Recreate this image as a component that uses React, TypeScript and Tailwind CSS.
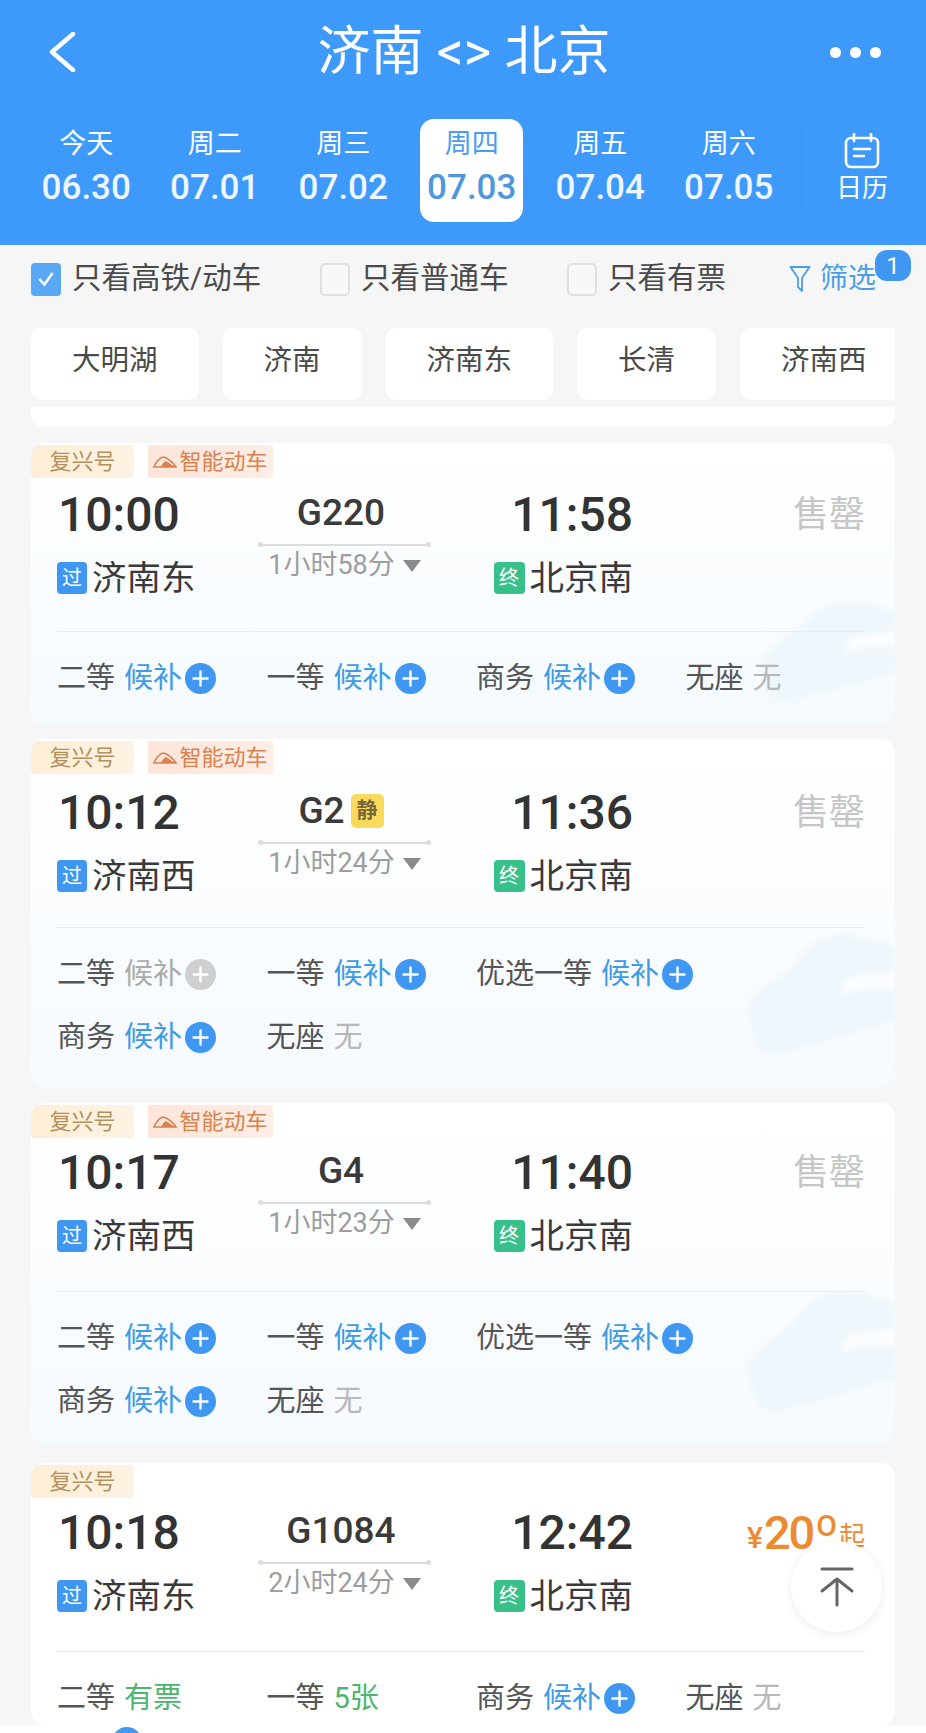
import React from "react";

type Seat = {
  name: string;
  status: string;
  kind: "wait" | "waitOff" | "none" | "ok";
};

type Train = {
  code: string;
  quiet?: boolean;
  smart: boolean;
  depart: string;
  arrive: string;
  from: string;
  to: string;
  duration: string;
  price?: boolean;
  seats: Seat[];
  cardClass: string;
  tagClass: string;
  waveClass?: string;
};

const days = [
  ["今天", "06.30"],
  ["周二", "07.01"],
  ["周三", "07.02"],
  ["周四", "07.03"],
  ["周五", "07.04"],
  ["周六", "07.05"],
];

const chips = ["大明湖", "济南", "济南东", "长清", "济南西"];

const trains: Train[] = [
  {
    code: "G220",
    smart: true,
    depart: "10:00",
    arrive: "11:58",
    from: "济南东",
    to: "北京南",
    duration: "1小时58分",
    cardClass: "mt-[16px] h-[282px] bg-linear-to-b from-white to-[#f4fafe]",
    tagClass: "h-[38px]",
    waveClass: "bottom-[22px] h-[101px] w-[139px]",
    seats: [
      { name: "二等", status: "候补", kind: "wait" },
      { name: "一等", status: "候补", kind: "wait" },
      { name: "商务", status: "候补", kind: "wait" },
      { name: "无座", status: "无", kind: "none" },
    ],
  },
  {
    code: "G2",
    quiet: true,
    smart: true,
    depart: "10:12",
    arrive: "11:36",
    from: "济南西",
    to: "北京南",
    duration: "1小时24分",
    cardClass: "mt-[14px] h-[348px] bg-linear-to-b from-white to-[#f5fafe]",
    tagClass: "h-[40px]",
    waveClass: "bottom-[30px] h-[122px] w-[151px]",
    seats: [
      { name: "二等", status: "候补", kind: "waitOff" },
      { name: "一等", status: "候补", kind: "wait" },
      { name: "优选一等", status: "候补", kind: "wait" },
      { name: "商务", status: "候补", kind: "wait" },
      { name: "无座", status: "无", kind: "none" },
    ],
  },
  {
    code: "G4",
    smart: true,
    depart: "10:17",
    arrive: "11:40",
    from: "济南西",
    to: "北京南",
    duration: "1小时23分",
    cardClass: "mt-[16px] h-[342px] bg-linear-to-b from-white to-[#f5fafe]",
    tagClass: "h-[36px]",
    waveClass: "bottom-[31px] h-[122px] w-[151px]",
    seats: [
      { name: "二等", status: "候补", kind: "wait" },
      { name: "一等", status: "候补", kind: "wait" },
      { name: "优选一等", status: "候补", kind: "wait" },
      { name: "商务", status: "候补", kind: "wait" },
      { name: "无座", status: "无", kind: "none" },
    ],
  },
  {
    code: "G1084",
    smart: false,
    depart: "10:18",
    arrive: "12:42",
    from: "济南东",
    to: "北京南",
    duration: "2小时24分",
    price: true,
    cardClass: "mt-[18px] h-[262px] bg-white",
    tagClass: "h-[36px]",
    seats: [
      { name: "二等", status: "有票", kind: "ok" },
      { name: "一等", status: "5张", kind: "ok" },
      { name: "商务", status: "候补", kind: "wait" },
      { name: "无座", status: "无", kind: "none" },
    ],
  },
];

const statusColor: Record<Seat["kind"], string> = {
  wait: "text-[#3f9be6]",
  waitOff: "text-[#ababab]",
  none: "text-[#b8b8b8]",
  ok: "text-[#4db56e]",
};

const PlusDot = ({ off }: { off: boolean }) => (
  <svg viewBox="0 0 31 31" className="ml-[3px] h-[31px] w-[31px] shrink-0">
    <circle cx="15.5" cy="15.5" r="15.5" fill={off ? "#cfcfcf" : "#3f97f2"} />
    <path d="M15.5 8.5v14M8.5 15.5h14" stroke="#fff" strokeWidth="2.4" strokeLinecap="round" />
  </svg>
);

const Wave = ({ className }: { className: string }) => (
  <svg
    viewBox="0 0 150 102"
    preserveAspectRatio="none"
    className={`pointer-events-none absolute right-0 blur-[2px] ${className}`}
  >
    <path
      d="M5 58C18 42 36 36 48 26C58 16 64 9 72 5C84 0 94 -1 102 0C120 1 138 5 150 10V71C128 78 106 83 85 88C66 92 46 98 28 100C14 101 3 78 5 58Z"
      fill="#eff7fc"
    />
    <path d="M95 50C98 42 101 37 105 35C120 32 136 31 150 30V45C138 46 128 46 118 46C110 47 102 49 95 50Z" fill="#fafcfe" />
  </svg>
);

const TrainCard = ({ t }: { t: Train }) => (
  <div className={`relative mx-[31px] w-[864px] overflow-hidden rounded-[14px] ${t.cardClass}`}>
    {t.waveClass && <Wave className={t.waveClass} />}
    <div className="relative h-[188px]">
      <div className={`flex items-start gap-[14px] pt-[2px] ${t.tagClass}`}>
        <div className="flex h-[33px] w-[103px] items-center justify-center rounded-[2px] bg-linear-to-r from-[#fdeed6] to-[#fdf3e2] text-[22px] text-[#b3905f]">
          复兴号
        </div>
        {t.smart && (
          <div className="flex h-[33px] w-[125px] items-center justify-center gap-[2px] rounded-[2px] bg-linear-to-r from-[#fde5da] to-[#fdeee6] text-[22px] text-[#d8824e]">
            <svg viewBox="0 0 24 12" className="h-[12px] w-[24px]">
              <path d="M1 11C3 6 7 1.500 10 1C14 1.500 20 6 23 11Z" fill="none" stroke="#d8824e" strokeWidth="1.6" />
              <path d="M8 11C9 8 11 6 13 5L22 11Z" fill="#d8824e" />
            </svg>
            智能动车
          </div>
        )}
      </div>
      <div className="grid grid-cols-[201px_173px_202px_232px] pl-[26px]">
        <div>
          <div className="h-[68px] pl-[1px] text-[48px] leading-[68px] font-medium text-[#333]">
            {t.depart}
          </div>
          <div className="flex h-[58px] items-center gap-[5px]">
            <span className="flex h-[32px] w-[30px] items-center justify-center rounded-[4px] bg-[#3f97f2] text-[20px] text-white">
              过
            </span>
            <span className="text-[34.5px] leading-none text-[#3a3a3a]">{t.from}</span>
          </div>
        </div>
        <div className="flex flex-col items-center">
          <div className="flex h-[63px] items-center pr-[7px] text-[37px] font-medium text-[#3a3a3a]">
            {t.code}
            {t.quiet && (
              <span className="ml-[6px] flex h-[34px] w-[33px] items-center justify-center rounded-[5px] bg-[#fbd95c] text-[21px] font-bold text-[#77683a]">
                静
              </span>
            )}
          </div>
          <div className="relative h-[1.5px] w-full bg-[#dddddd]">
            <span className="absolute top-[-2px] left-0 h-[5px] w-[5px] rounded-full bg-[#dddddd]" />
            <span className="absolute top-[-2px] right-0 h-[5px] w-[5px] rounded-full bg-[#dddddd]" />
          </div>
          <div className="flex h-[40px] items-center text-[27px] text-[#9d9d9d]">
            {t.duration}
            <span className="ml-[8px] h-0 w-0 border-x-[9px] border-t-[12px] border-x-transparent border-t-[#8b8b8b]" />
          </div>
        </div>
        <div className="flex flex-col items-end">
          <div className="h-[68px] text-[48px] leading-[68px] font-medium text-[#333]">{t.arrive}</div>
          <div className="flex h-[58px] items-center gap-[5px]">
            <span className="flex h-[32px] w-[31px] items-center justify-center rounded-[4px] bg-[#37c08a] text-[20px] text-white">
              终
            </span>
            <span className="text-[34.5px] leading-none text-[#3a3a3a]">{t.to}</span>
          </div>
        </div>
        <div className="flex justify-end">
          {t.price ? (
            <div className="flex h-[68px] items-center text-[#ec8a32]">
              <span className="mt-[8px] text-[30px] font-medium">¥</span>
              <span className="ml-[1px] text-[47px] font-medium tracking-[-2px]">20</span>
              <span className="mb-[14px] ml-[3px] text-[30px] leading-none font-medium">O</span>
              <span className="mt-[6px] ml-[2px] text-[26px] leading-[26px]">起</span>
            </div>
          ) : (
            <div className="h-[68px] text-[36px] leading-[68px] text-[#c6c6c6]">售罄</div>
          )}
        </div>
      </div>
    </div>
    <div className="relative mr-[30px] ml-[26px] h-[1px] bg-[#e6edf1]" />
    <div className="relative mt-[15px] grid grid-cols-4 pl-[26px] [grid-auto-rows:63px]">
      {t.seats.map((s, i) => (
        <div
          key={i}
          className={`flex h-[63px] items-center whitespace-nowrap text-[29px] leading-none ${
            t.seats.length === 5 && i === 3 ? "col-start-1" : ""
          }`}
        >
          <span className="text-[#555]">{s.name}</span>
          <span className={`ml-[9px] ${statusColor[s.kind]}`}>{s.status}</span>
          {(s.kind === "wait" || s.kind === "waitOff") && <PlusDot off={s.kind === "waitOff"} />}
        </div>
      ))}
    </div>
  </div>
);

const CheckItem = ({
  label,
  checked,
  width,
}: {
  label: string;
  checked?: boolean;
  width: string;
}) => (
  <div className={`flex items-center gap-[11px] ${width}`}>
    {checked ? (
      <span className="flex h-[33px] w-[30px] items-center justify-center rounded-[4px] bg-[#5aa8f5]">
        <svg viewBox="0 0 20 20" className="h-[22px] w-[22px]">
          <path d="M4 10l4.500 5L16 4.500" fill="none" stroke="#fff" strokeWidth="2.2" />
        </svg>
      </span>
    ) : (
      <span className="h-[33px] w-[30px] rounded-[5px] border-2 border-[#e0e0e0] bg-[#f8f8f8]" />
    )}
    <span className="text-[29.5px] leading-none whitespace-nowrap text-[#4a4a4a]">{label}</span>
  </div>
);

export default function App() {
  return (
    <div className="relative h-[1733px] w-[926px] overflow-hidden bg-[#f6f6f6] [font-family:Roboto,'Noto_Sans_CJK_SC',sans-serif]">
      <header className="h-[245px] bg-[#3d9afb] text-white">
        <div className="grid h-[104px] grid-cols-[1fr_auto_1fr] items-center pr-[45px] pl-[47px]">
          <svg viewBox="0 0 30 40" className="h-[40px] w-[30px]">
            <path
              d="M26 2L5 20l21 18"
              fill="none"
              stroke="#fff"
              strokeWidth="4.500"
              strokeLinecap="round"
              strokeLinejoin="round"
            />
          </svg>
          <div className="text-[53px] leading-none whitespace-nowrap">济南 &lt;&gt; 北京</div>
          <div className="flex justify-end gap-[9px]">
            <span className="h-[11px] w-[11px] rounded-full bg-white" />
            <span className="h-[11px] w-[11px] rounded-full bg-white" />
            <span className="h-[11px] w-[11px] rounded-full bg-white" />
          </div>
        </div>
        <div className="mt-[15px] flex pl-[22px]">
          {days.map(([label, date], i) => (
            <div key={date} className="flex w-[128.5px] justify-center">
              <div
                className={`flex h-[103px] w-[103px] flex-col items-center rounded-[14px] ${
                  i === 3 ? "bg-white text-[#4b9df0]" : ""
                }`}
              >
                <div className="h-[48px] pt-[1px] text-[27px] leading-[48px]">{label}</div>
                <div
                  className={`h-[42px] text-[35px] leading-[42px] font-medium ${
                    i === 3 ? "text-[#4f97dc]" : "text-[#eef6ff]"
                  }`}
                >
                  {date}
                </div>
              </div>
            </div>
          ))}
          <div className="relative flex flex-1 flex-col items-center pt-[14px] pl-[5px]">
            <span className="absolute top-[6px] left-0 h-[84px] w-[10px] bg-linear-to-r from-[#3d9afb] to-[#3b98f9]" />
            <svg viewBox="0 0 36 36" className="h-[36px] w-[36px]">
              <rect x="2" y="5" width="32" height="29" rx="5" fill="none" stroke="#fff" strokeWidth="2.6" />
              <path d="M10 1v7M27 1v7" stroke="#fff" strokeWidth="2.6" strokeLinecap="round" />
              <path d="M10 16h16M10 23h10" stroke="#fff" strokeWidth="2.6" strokeLinecap="round" />
            </svg>
            <div className="h-[38px] text-[26px] leading-[38px]">日历</div>
          </div>
        </div>
      </header>

      <div className="flex h-[68px] items-center pl-[31px]">
        <CheckItem label="只看高铁/动车" checked width="w-[289px]" />
        <CheckItem label="只看普通车" width="w-[247px]" />
        <CheckItem label="只看有票" width="w-[222px]" />
        <div className="relative flex items-center gap-[9px] text-[28px] leading-none text-[#4a9fe8]">
          <svg viewBox="0 0 22 28" className="h-[28px] w-[22px]">
            <path d="M1.500 2h19L13 13v13l-4-4v-9Z" fill="none" stroke="#4a9fe8" strokeWidth="1.8" strokeLinejoin="round" />
          </svg>
          筛选
          <span className="absolute top-[-15px] left-[86px] flex h-[31px] w-[36px] items-center justify-center rounded-[12px] bg-[#3f97f2] text-[24px] text-white">
            1
          </span>
        </div>
      </div>

      <div className="mx-[31px] mt-[15px] flex w-[864px] gap-[24px] overflow-hidden">
        {chips.map((c) => (
          <div
            key={c}
            className="flex h-[72px] shrink-0 items-center rounded-[10px] bg-white px-[41px] pb-[6px] text-[28.5px] leading-none text-[#4a4a4a]"
          >
            {c}
          </div>
        ))}
      </div>

      <div className="mx-[31px] mt-[7px] h-[20px] w-[864px] rounded-b-[12px] bg-white" />

      {trains.map((t) => (
        <TrainCard key={t.code} t={t} />
      ))}

      <div className="relative mt-0 h-[8px] overflow-hidden bg-white">
        <span className="absolute top-[2px] left-[112px] h-[30px] w-[30px] rounded-full bg-[#3f97f2]" />
      </div>

      <button className="absolute top-[1541px] left-[791px] flex h-[91px] w-[91px] items-center justify-center rounded-full bg-white shadow-[0_2px_10px_rgba(0,0,0,0.08)]">
        <svg viewBox="0 0 36 40" className="h-[40px] w-[36px]">
          <path d="M3 2h30" stroke="#666" strokeWidth="3" strokeLinecap="round" />
          <path d="M18 12v26M3 24l15-12 15 12" fill="none" stroke="#666" strokeWidth="3" strokeLinecap="round" strokeLinejoin="round" />
        </svg>
      </button>
    </div>
  );
}
